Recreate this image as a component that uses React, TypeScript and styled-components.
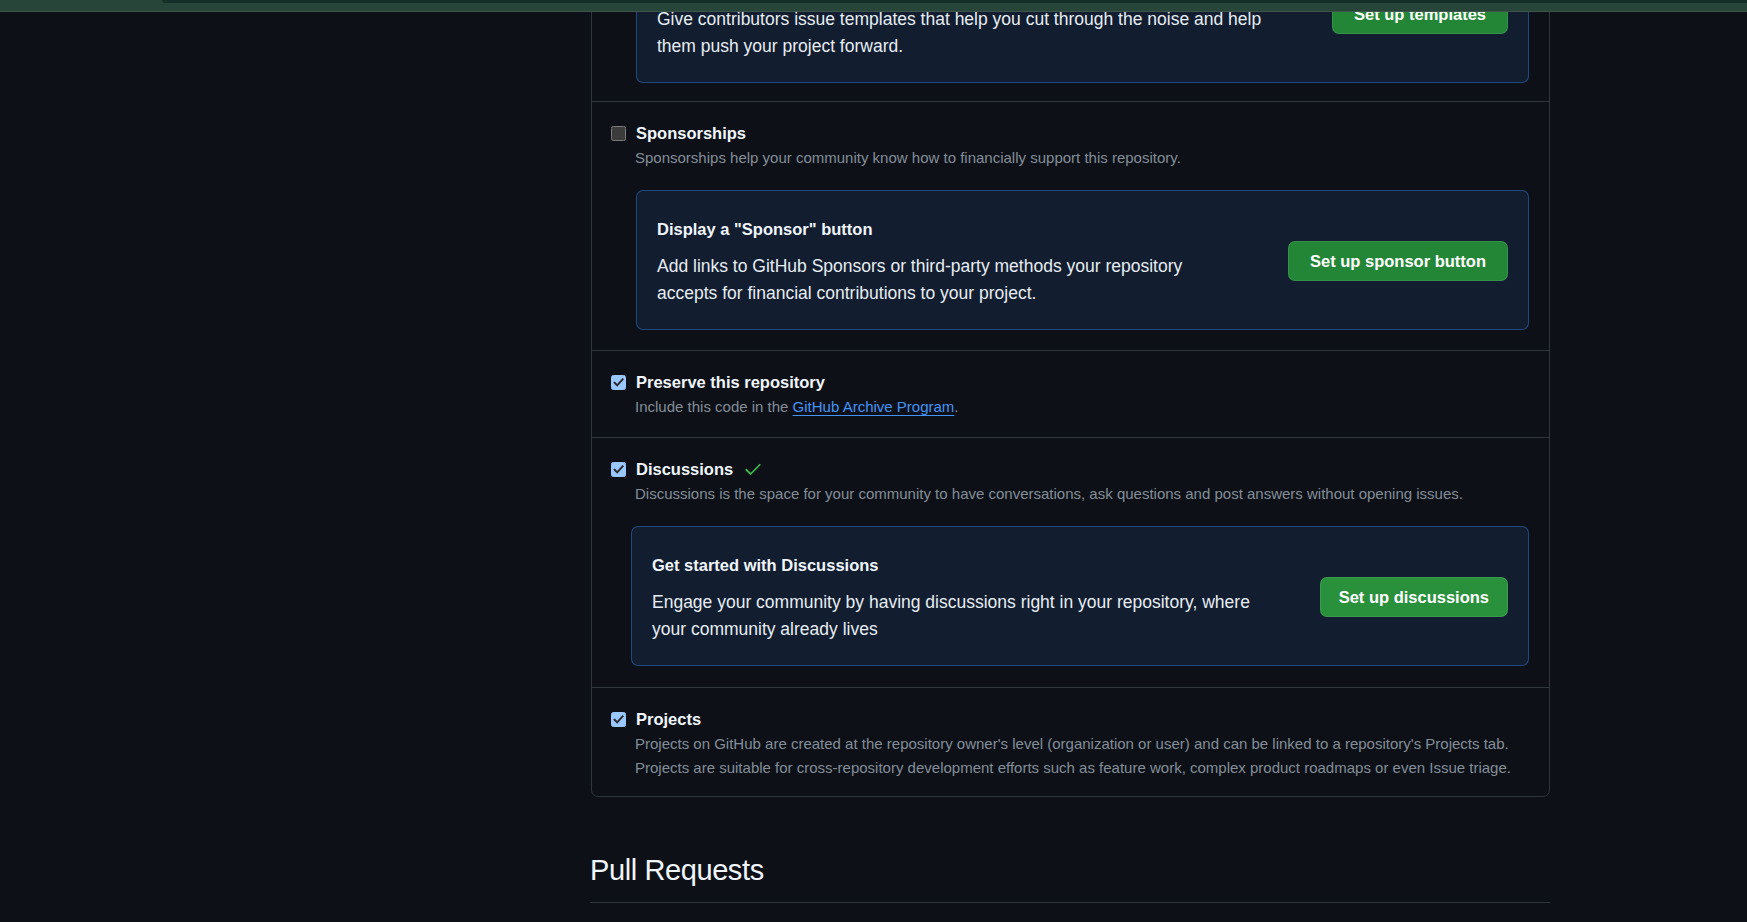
import React from "react";
import styled, { createGlobalStyle } from "styled-components";

const GlobalStyle = createGlobalStyle`
  * { box-sizing: border-box; }
  html, body { margin: 0; padding: 0; background: #0d1117; }
  body {
    font-family: "Liberation Sans", Arial, sans-serif;
    color: #e6edf3;
    overflow: hidden;
  }
`;

const TopBand = styled.header`
  position: fixed;
  top: 0;
  left: 0;
  right: 0;
  height: 12px;
  display: flex;
  align-items: flex-start;
  background: #284539;
  border-bottom: 1px solid #3e554e;
  z-index: 10;
`;

const BandStrip = styled.div`
  margin-left: 162px;
  flex: 1;
  height: 3px;
  background: #15302a;
  border-bottom-left-radius: 4px;
`;

const Page = styled.div`
  display: flex;
  height: 922px;
  overflow: hidden;
`;

const SideColumn = styled.aside`
  flex: none;
  width: 591px;
`;

const Main = styled.main`
  flex: none;
  width: 959px;
  margin-top: -76px;
`;

const SettingsBox = styled.section`
  border: 1px solid #30363d;
  border-radius: 7px;
`;

const Row = styled.div<{ $pt?: number; $pb?: number }>`
  padding: ${(p) => p.$pt ?? 18}px 20px ${(p) => p.$pb ?? 19}px 19px;
  & + & {
    border-top: 1px solid #30363d;
  }
`;

const Field = styled.label`
  display: flex;
  align-items: center;
  gap: 10px;
  height: 26px;
`;

const Box = styled.span<{ $checked: boolean }>`
  flex: none;
  width: 15px;
  height: 15px;
  border-radius: 2.5px;
  display: flex;
  align-items: center;
  justify-content: center;
  background: ${(p) => (p.$checked ? "#99c8ff" : "#3b3b3b")};
  border: 1px solid ${(p) => (p.$checked ? "#99c8ff" : "#7a7a7a")};
`;

const Title = styled.span`
  font-size: 16.5px;
  font-weight: 700;
  line-height: 26px;
  color: #f0f6fc;
`;

const Note = styled.p`
  margin: 0 0 0 24px;
  font-size: 15px;
  line-height: 24px;
  color: #848d97;
`;

const Link = styled.a`
  color: #4493f8;
  text-decoration: underline;
  text-underline-offset: 3px;
`;

const Card = styled.div<{ $inset: number; $top: number }>`
  margin: ${(p) => p.$top}px 0 0 ${(p) => p.$inset}px;
  display: flex;
  align-items: center;
  gap: 40px;
  padding: 25px 20px 23px 20px;
  background: #121d2f;
  border: 1px solid rgba(56, 139, 253, 0.4);
  border-radius: 7px;
`;

const CardBody = styled.div`
  flex: 1;
  min-width: 0;
`;

const CardTitle = styled.h3`
  margin: 0;
  font-size: 16.5px;
  font-weight: 700;
  line-height: 26px;
  color: #f0f6fc;
`;

const CardText = styled.p`
  margin: 11px 0 0;
  font-size: 17.5px;
  line-height: 26.5px;
  color: #e6edf3;
  white-space: nowrap;
`;

const Button = styled.button<{ $hover?: boolean; $pad?: number }>`
  flex: none;
  height: 40px;
  padding: 0 ${(p) => p.$pad ?? 21}px;
  border-radius: 7px;
  border: 1px solid rgba(240, 246, 252, 0.1);
  background: ${(p) => (p.$hover ? "#29903b" : "#238636")};
  color: #ffffff;
  font-family: inherit;
  font-size: 16.5px;
  font-weight: 700;
  cursor: pointer;
`;

const Subhead = styled.div`
  margin-top: 55px;
  margin-left: -1px;
  padding-bottom: 14px;
  border-bottom: 1px solid #30363d;
`;

const SubheadTitle = styled.h2`
  margin: 0;
  font-size: 29px;
  font-weight: 400;
  letter-spacing: -0.4px;
  line-height: 36px;
  color: #f0f6fc;
`;

function CheckBox({ checked }: { checked: boolean }) {
  return (
    <Box $checked={checked}>
      {checked && (
        <svg width="13" height="13" viewBox="0 0 13 13" aria-hidden="true">
          <polyline
            points="2.6,6.8 5.2,9.4 10.6,3.4"
            fill="none"
            stroke="#2b2b2b"
            strokeWidth="2"
            strokeLinecap="square"
          />
        </svg>
      )}
    </Box>
  );
}

function GreenCheck() {
  return (
    <svg width="20" height="20" viewBox="0 0 16 16" aria-hidden="true">
      <polyline
        points="2.6,8.6 6.1,12 13.4,4.6"
        fill="none"
        stroke="#3fb950"
        strokeWidth="1.4"
        strokeLinecap="round"
        strokeLinejoin="round"
      />
    </svg>
  );
}

export default function App() {
  return (
    <>
      <GlobalStyle />
      <TopBand>
        <BandStrip />
      </TopBand>
      <Page>
        <SideColumn />
        <Main>
          <SettingsBox>
            <Row $pb={18}>
              <Card $inset={25} $top={0}>
                <CardBody>
                  <CardTitle>Get organized with issue templates</CardTitle>
                  <CardText>
                    Give contributors issue templates that help you cut through the noise and help
                    <br />
                    them push your project forward.
                  </CardText>
                </CardBody>
                <Button>Set up templates</Button>
              </Card>
            </Row>

            <Row $pt={18} $pb={20}>
              <Field>
                <CheckBox checked={false} />
                <Title>Sponsorships</Title>
              </Field>
              <Note>Sponsorships help your community know how to financially support this repository.</Note>
              <Card $inset={25} $top={20}>
                <CardBody>
                  <CardTitle>Display a "Sponsor" button</CardTitle>
                  <CardText>
                    Add links to GitHub Sponsors or third-party methods your repository
                    <br />
                    accepts for financial contributions to your project.
                  </CardText>
                </CardBody>
                <Button>Set up sponsor button</Button>
              </Card>
            </Row>

            <Row $pb={18}>
              <Field>
                <CheckBox checked />
                <Title>Preserve this repository</Title>
              </Field>
              <Note>
                Include this code in the <Link href="#">GitHub Archive Program</Link>.
              </Note>
            </Row>

            <Row $pb={21}>
              <Field>
                <CheckBox checked />
                <Title>Discussions</Title>
                <GreenCheck />
              </Field>
              <Note>
                Discussions is the space for your community to have conversations, ask questions and post answers without opening issues.
              </Note>
              <Card $inset={20} $top={20}>
                <CardBody>
                  <CardTitle>Get started with Discussions</CardTitle>
                  <CardText>
                    Engage your community by having discussions right in your repository, where
                    <br />
                    your community already lives
                  </CardText>
                </CardBody>
                <Button $hover $pad={18}>Set up discussions</Button>
              </Card>
            </Row>

            <Row $pb={16}>
              <Field>
                <CheckBox checked />
                <Title>Projects</Title>
              </Field>
              <Note>
                Projects on GitHub are created at the repository owner's level (organization or user) and can be linked to a repository's Projects tab.
                <br />
                Projects are suitable for cross-repository development efforts such as feature work, complex product roadmaps or even Issue triage.
              </Note>
            </Row>
          </SettingsBox>

          <Subhead>
            <SubheadTitle>Pull Requests</SubheadTitle>
          </Subhead>
        </Main>
      </Page>
    </>
  );
}
